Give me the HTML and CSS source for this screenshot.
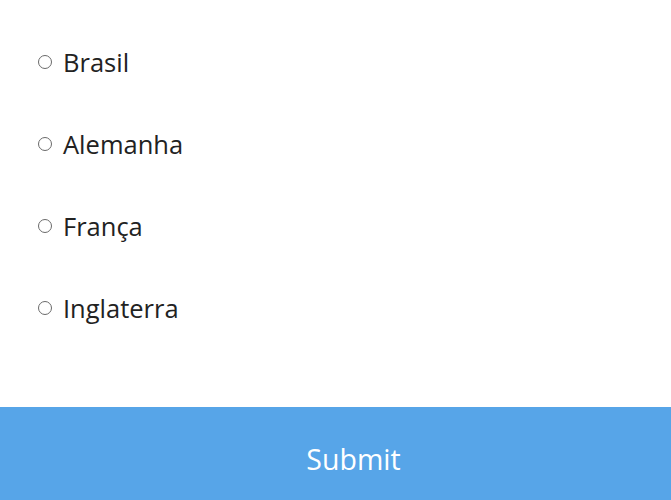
FILE: index.html
```html
<!DOCTYPE html>
<html>
<head>
<meta charset="utf-8">
<link rel="stylesheet" href="styles.css">
</head>
<body>
<form class="quiz">
  <div class="options">
    <label class="option"><input type="radio" name="c" class="radio"><span>Brasil</span></label>
    <label class="option"><input type="radio" name="c" class="radio"><span>Alemanha</span></label>
    <label class="option"><input type="radio" name="c" class="radio"><span>França</span></label>
    <label class="option"><input type="radio" name="c" class="radio"><span>Inglaterra</span></label>
  </div>
  <button type="button" class="submit">Submit</button>
</form>
</body>
</html>
```

FILE: styles.css
```css
html, body {
  margin: 0;
  padding: 0;
  background: #ffffff;
}
body {
  font-family: "Open Sans", "Noto Sans", sans-serif;
  color: #222222;
}
.quiz {
  display: flex;
  flex-direction: column;
}
.options {
  display: flex;
  flex-direction: column;
  padding: 21px 0 58px 38px;
}
.option {
  display: flex;
  align-items: center;
  height: 82px;
  font-size: 25.5px;
  gap: 11px;
}
.radio {
  appearance: none;
  -webkit-appearance: none;
  margin: 0;
  width: 14px;
  height: 14px;
  border: 1.6px solid #6a6a6a;
  border-radius: 50%;
  box-sizing: border-box;
  background: #fff;
}
.submit {
  display: block;
  width: 100%;
  height: 93px;
  border: none;
  margin: 0;
  background: #57a5e8;
  color: #ffffff;
  font-family: "Open Sans", "Noto Sans", sans-serif;
  font-size: 28.5px;
  padding: 10px 0 0 36px;
}
```
